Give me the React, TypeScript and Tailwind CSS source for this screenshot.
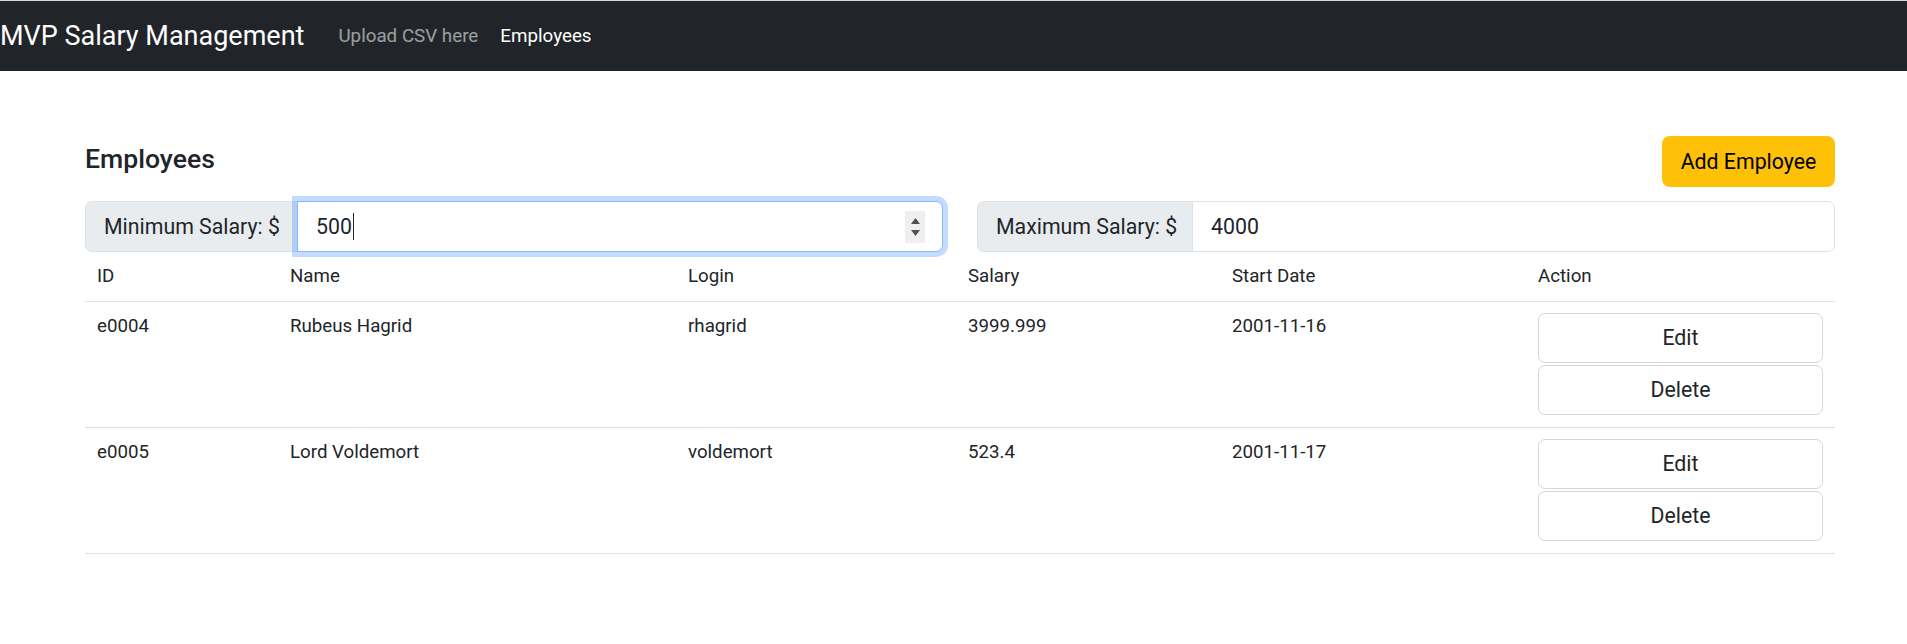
import React, { useState } from 'react';

interface Employee {
  id: string;
  name: string;
  login: string;
  salary: string;
  startDate: string;
}

const employees: Employee[] = [
  { id: 'e0004', name: 'Rubeus Hagrid', login: 'rhagrid', salary: '3999.999', startDate: '2001-11-16' },
  { id: 'e0005', name: 'Lord Voldemort', login: 'voldemort', salary: '523.4', startDate: '2001-11-17' },
];

const Spinner: React.FC = () => (
  <div className="flex h-[32px] w-[20px] shrink-0 flex-col items-center justify-center gap-[6px] bg-[#efefef]">
    <svg width="9" height="6" viewBox="0 0 9 6">
      <path d="M4.5 0 L9 6 L0 6 Z" fill="#505050" />
    </svg>
    <svg width="9" height="6" viewBox="0 0 9 6">
      <path d="M0 0 L9 0 L4.5 6 Z" fill="#505050" />
    </svg>
  </div>
);

export default function App() {
  const [minSalary, setMinSalary] = useState('500');
  const [maxSalary, setMaxSalary] = useState('4000');

  return (
    <div className="min-h-screen bg-white font-['Roboto',sans-serif] text-[#212529]">
      <nav className="flex h-[71px] items-center border-t border-[#d9d9d9] bg-[#212529]">
        <a href="#" className="mr-[34px] text-[27px] leading-none text-white">
          MVP Salary Management
        </a>
        <a href="#" className="text-[18.8px] leading-none text-white/55">
          Upload CSV here
        </a>
        <a href="#" className="ml-[22px] text-[18.8px] leading-none text-white">
          Employees
        </a>
      </nav>

      <main className="ml-[85px] w-[1750px] pt-[65px]">
        <div className="flex items-center justify-between">
          <h5 className="pb-[4px] text-[26.6px] font-medium leading-none">Employees</h5>
          <button className="h-[51px] w-[173px] rounded-[8px] bg-[#ffc107] text-[21.3px] text-black">
            Add Employee
          </button>
        </div>

        <div className="mt-[14px] flex gap-[34px]">
          <div className="flex h-[51px] w-[858px] text-[21.3px]">
            <span className="flex w-[213px] shrink-0 items-center rounded-l-[7px] border border-[#dee2e6] bg-[#e9ecef] pl-[18px]">
              Minimum Salary: $
            </span>
            <div className="relative z-10 -ml-px flex flex-1 items-center rounded-r-[7px] border border-[#86b7fe] bg-white pr-[17px] shadow-[0_0_0_5px_rgba(13,110,253,0.25)]">
              <input
                type="text"
                value={minSalary}
                onChange={(e) => setMinSalary(e.target.value)}
                className="w-[55px] bg-transparent pl-[18px] outline-none"
              />
              <span className="h-[27px] w-px bg-[#212529]" />
              <span className="flex-1" />
              <Spinner />
            </div>
          </div>

          <div className="flex h-[51px] w-[858px] text-[21.3px]">
            <span className="flex w-[216px] shrink-0 items-center rounded-l-[7px] border border-[#dee2e6] bg-[#e9ecef] pl-[18px]">
              Maximum Salary: $
            </span>
            <input
              type="text"
              value={maxSalary}
              onChange={(e) => setMaxSalary(e.target.value)}
              className="-ml-px min-w-0 flex-1 rounded-r-[7px] border border-[#dee2e6] bg-white pl-[18px] outline-none"
            />
          </div>
        </div>

        <table className="w-full table-fixed border-collapse text-[18.7px] leading-[26px]">
          <colgroup>
            <col className="w-[193px]" />
            <col className="w-[398px]" />
            <col className="w-[280px]" />
            <col className="w-[264px]" />
            <col className="w-[306px]" />
            <col className="w-[309px]" />
          </colgroup>
          <thead>
            <tr className="border-b border-[#dee2e6]">
              {['ID', 'Name', 'Login', 'Salary', 'Start Date', 'Action'].map((h) => (
                <th key={h} className="px-[12px] pt-[11px] pb-[12px] text-left font-normal">
                  {h}
                </th>
              ))}
            </tr>
          </thead>
          <tbody>
            {employees.map((emp) => (
              <tr key={emp.id} className="border-b border-[#dee2e6] align-top">
                <td className="px-[12px] pt-[11px] pb-[12px]">{emp.id}</td>
                <td className="px-[12px] pt-[11px] pb-[12px]">{emp.name}</td>
                <td className="px-[12px] pt-[11px] pb-[12px]">{emp.login}</td>
                <td className="px-[12px] pt-[11px] pb-[12px]">{emp.salary}</td>
                <td className="px-[12px] pt-[11px] pb-[12px]">{emp.startDate}</td>
                <td className="px-[12px] pt-[11px] pb-[12px]">
                  <div className="flex flex-col gap-[2px]">
                    <button className="h-[50px] w-full rounded-[7px] border border-[#d3d7db] bg-white text-[21.3px]">
                      Edit
                    </button>
                    <button className="h-[50px] w-full rounded-[7px] border border-[#d3d7db] bg-white text-[21.3px]">
                      Delete
                    </button>
                  </div>
                </td>
              </tr>
            ))}
          </tbody>
        </table>
      </main>
    </div>
  );
}
